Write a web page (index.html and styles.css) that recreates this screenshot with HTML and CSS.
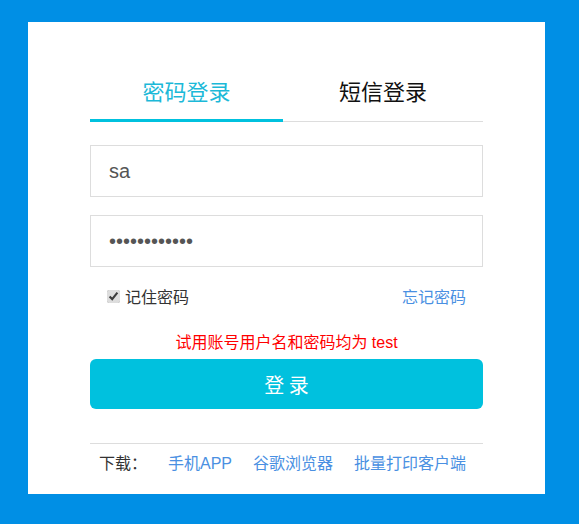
FILE: index.html
```html
<!doctype html>
<html>
<head>
	<meta charset="utf-8">
	<title>登录</title>
	<link rel="stylesheet" href="styles.css">
</head>
<body>
	<div class="login-box">
		<div class="tabs">
			<div class="tab active">密码登录</div>
			<div class="tab">短信登录</div>
		</div>
		<form class="login-form">
			<input class="field" type="text" value="sa">
			<input class="field field-pwd" type="password" value="123456789012">
			<div class="remember-row">
				<label class="remember"><input type="checkbox" checked>记住密码</label>
				<a class="forget" href="#">忘记密码</a>
			</div>
			<p class="tip">试用账号用户名和密码均为 test</p>
			<button class="btn-login" type="button">登 录</button>
		</form>
		<div class="download">
			<span class="download-label">下载：</span>
			<a href="#">手机APP</a>
			<a href="#">谷歌浏览器</a>
			<a href="#">批量打印客户端</a>
		</div>
	</div>
</body>
</html>
```

FILE: styles.css
```css
*{
	margin:0;
	padding:0;
	box-sizing:border-box;
}
html,body{
	height:100%;
}
body{
	background:#008fe5;
	font-family:"Liberation Sans","Noto Sans CJK SC",Arial,sans-serif;
	color:#333;
	overflow:hidden;
}
a{
	color:#4a90e2;
	text-decoration:none;
}
.login-box{
	width:517px;
	height:472px;
	margin:22px 0 0 28px;
	padding:40px 62px 10px;
	background:#fff;
}
.tabs{
	display:flex;
	border-bottom:1px solid #ddd;
}
.tab{
	flex:1;
	height:60px;
	margin-bottom:-1px;
	line-height:57px;
	border-bottom:3px solid transparent;
	font-family:"Noto Sans CJK SC",sans-serif;
	font-size:22px;
	text-align:center;
	color:#111;
}
.tab.active{
	flex:0 0 193px;
	color:#1cb9d8;
	border-bottom-color:#00c1de;
}
.login-form{
	display:flex;
	flex-direction:column;
}
.field{
	display:block;
	width:100%;
	height:52px;
	margin-top:23px;
	padding:0 18px;
	border:1px solid #ddd;
	font-family:"Liberation Sans",Arial,sans-serif;
	font-size:20px;
	color:#555;
	outline:none;
}
.field-pwd{
	margin-top:18px;
}
.remember-row{
	display:flex;
	justify-content:space-between;
	align-items:center;
	height:30px;
	margin-top:14px;
	padding:0 17px 0 13px;
	font-size:16px;
}
.remember{
	display:flex;
	align-items:center;
	color:#333;
}
.remember input{
	width:13px;
	height:13px;
	margin:0 5px 0 4px;
	accent-color:#ddd;
}
.tip{
	margin-top:20px;
	line-height:24px;
	text-align:center;
	font-size:16px;
	color:#f00;
}
.btn-login{
	height:50px;
	margin-top:4px;
	border:none;
	border-radius:6px;
	background:#00c1de;
	color:#fff;
	font-family:"Noto Sans CJK SC",sans-serif;
	font-size:20px;
	cursor:pointer;
}
.download{
	display:flex;
	justify-content:space-between;
	height:41px;
	margin-top:34px;
	padding:0 17px 0 9px;
	border-top:1px solid #ddd;
	line-height:40px;
	font-size:16px;
}
.download-label{
	color:#333;
}
```
